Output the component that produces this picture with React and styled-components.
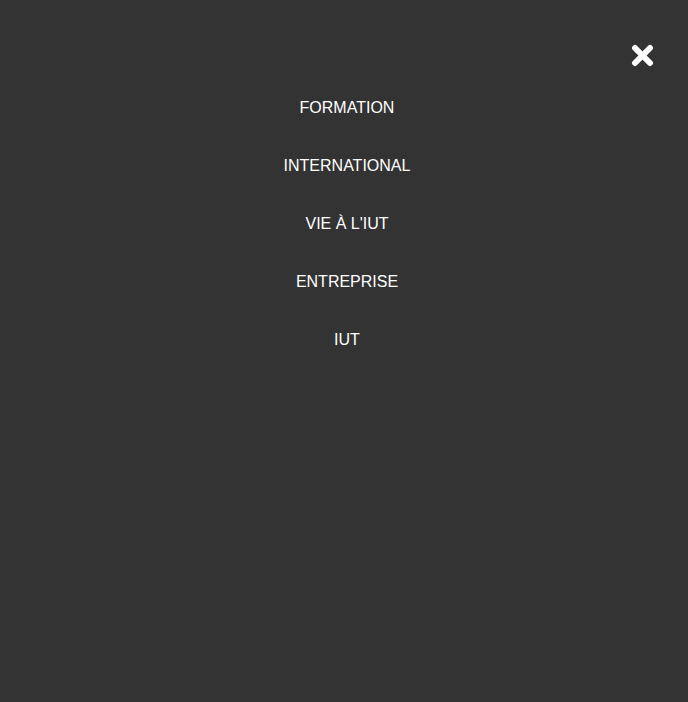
import React from 'react';
import styled, { createGlobalStyle } from 'styled-components';

const GlobalStyle = createGlobalStyle`
	html, body {
		margin: 0;
		padding: 0;
		background: #333333;
	}
	body {
		font-family: "Liberation Sans", Arial, sans-serif;
	}
`;

const Overlay = styled.div`
	width: 100%;
	min-height: 702px;
	background: #333333;
	display: flex;
	flex-direction: column;
`;

const TopBar = styled.div`
	display: flex;
	justify-content: flex-end;
	padding: 44px 34px 0 0;
`;

const CloseButton = styled.button`
	width: 23px;
	height: 23px;
	padding: 0;
	border: none;
	background: none;
	cursor: pointer;
	display: flex;
`;

const Menu = styled.ul`
	list-style: none;
	margin: 12px 0 0;
	padding: 0 0 0 6px;
	display: flex;
	flex-direction: column;
	align-items: center;
`;

const Item = styled.li`
	padding: 20px 0;
	line-height: 18px;
`;

const Link = styled.a`
	color: #ffffff;
	font-size: 16px;
	text-decoration: none;
	text-transform: uppercase;
`;

const links = ['Formation', 'International', "Vie à l'IUT", 'Entreprise', 'IUT'];

const App = () => (
	<Overlay>
		<GlobalStyle />
		<TopBar>
			<CloseButton aria-label="Fermer">
				<svg width="23" height="23" viewBox="0 0 23 23">
					<path
						d="M4 4 L19 19 M19 4 L4 19"
						stroke="#ffffff"
						strokeWidth="6"
						strokeLinecap="round"
						fill="none"
					/>
				</svg>
			</CloseButton>
		</TopBar>
		<Menu>
			{links.map(label => (
				<Item key={label}>
					<Link href="#">{label}</Link>
				</Item>
			))}
		</Menu>
	</Overlay>
);

export default App;
